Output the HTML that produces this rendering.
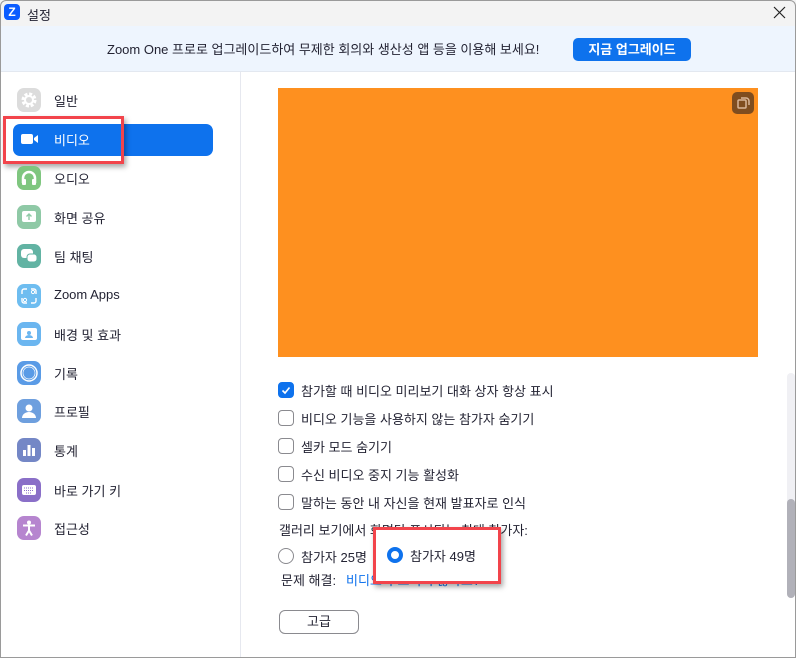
<!DOCTYPE html>
<html><head><meta charset="utf-8"><style>
*{margin:0;padding:0;box-sizing:border-box}
body{width:796px;height:658px;overflow:hidden;background:#fff;font-family:"Liberation Sans","Noto Sans CJK KR",sans-serif;font-size:13px;color:#232333;position:relative}
.abs{position:absolute}
.title{position:absolute;left:0;top:0;width:796px;height:26px;background:#f3f3f3}
.banner{position:absolute;left:0;top:26px;width:796px;height:46px;background:#eef5fe;border-bottom:1px solid #e3e8f0}
.side{position:absolute;left:0;top:72px;width:241px;height:586px;border-right:1px solid #e6e8ef}
.ic{position:absolute;left:17px;width:24px;height:24px;border-radius:7px}
.lbl{position:absolute;left:54px;font-size:13px}
.cb{position:absolute;left:278px;width:16px;height:16px;border:1px solid #8a8a8f;border-radius:4px;background:#fff}
.ct{position:absolute;left:301px;font-size:13px}
</style></head><body>
<div class="title">
 <div class="abs" style="left:4px;top:4px;width:16px;height:16px;border-radius:4px;background:#0b5cff;color:#fff;font-weight:bold;font-size:12px;text-align:center;line-height:16px">Z</div>
 <div class="abs" style="left:27px;top:5px;font-size:13px">설정</div>
 <svg class="abs" style="left:773px;top:6px" width="13" height="13"><path d="M1 1L12 12M12 1L1 12" stroke="#222" stroke-width="1.2"/></svg>
</div>
<div class="banner">
 <div class="abs" style="left:107px;top:13px;font-size:13px">Zoom One 프로로 업그레이드하여 무제한 회의와 생산성 앱 등을 이용해 보세요!</div>
 <div class="abs" style="left:573px;top:12px;width:118px;height:23px;background:#0e72ed;border-radius:5px;color:#fff;font-weight:bold;text-align:center;line-height:23px;font-size:13px">지금 업그레이드</div>
</div>
<div class="side">
 <div class="abs" style="left:13px;top:52px;width:200px;height:32px;background:#0e72ed;border-radius:7px"></div>
 <div class="abs" style="left:3px;top:44px;width:121px;height:48px;border:3px solid #f2444b;box-shadow:2px 3px 5px rgba(0,0,0,.35)"></div>
</div>
<div class="ic" style="top:88px;background:#dcdcdc"><svg width="24" height="24"><circle cx="12" cy="12" r="6" fill="none" stroke="#fff" stroke-width="3" stroke-dasharray="3 1.7"/><circle cx="12" cy="12" r="4" fill="none" stroke="#fff" stroke-width="2"/></svg></div>
<div class="lbl" style="top:91px">일반</div>
<svg class="abs" style="left:20px;top:132px" width="20" height="14"><rect x="1" y="2" width="12" height="10" rx="2" fill="#fff"/><path d="M14 6L18 3V11L14 8Z" fill="#fff"/></svg>
<div class="lbl" style="top:130px;color:#fff">비디오</div>
<div class="ic" style="top:166px;background:#7fc67f"><svg width="24" height="24"><path d="M6 17V12a6 6 0 0 1 12 0v5" fill="none" stroke="#fff" stroke-width="2.5"/><rect x="5" y="13" width="4" height="6" rx="1" fill="#fff"/><rect x="15" y="13" width="4" height="6" rx="1" fill="#fff"/></svg></div>
<div class="lbl" style="top:169px">오디오</div>
<div class="ic" style="top:205px;background:#8fc9a6"><svg width="24" height="24"><rect x="5" y="6" width="14" height="11" rx="2" fill="#fff"/><path d="M12 15V9M9.5 11.5L12 9L14.5 11.5" stroke="#8fc9a6" stroke-width="1.4" fill="none"/></svg></div>
<div class="lbl" style="top:208px">화면 공유</div>
<div class="ic" style="top:244px;background:#62b3a3"><svg width="24" height="24"><rect x="4" y="5" width="12" height="9" rx="3" fill="#fff"/><rect x="10" y="10" width="10" height="8" rx="3" fill="#fff" stroke="#62b3a3" stroke-width="1"/></svg></div>
<div class="lbl" style="top:247px">팀 채팅</div>
<div class="ic" style="top:284px;background:#6ebdf0"><svg width="24" height="24"><path d="M5 10V7a2 2 0 0 1 2-2h3M14 5h3a2 2 0 0 1 2 2v3M19 14v3a2 2 0 0 1-2 2h-3M10 19H7a2 2 0 0 1-2-2v-3" fill="none" stroke="#fff" stroke-width="1.4"/><circle cx="16" cy="8" r="1.6" fill="none" stroke="#fff"/><circle cx="8" cy="16" r="1.6" fill="none" stroke="#fff"/></svg></div>
<div class="lbl" style="top:287px">Zoom Apps</div>
<div class="ic" style="top:322px;background:#6bb6f0"><svg width="24" height="24"><rect x="4" y="6" width="16" height="12" rx="2" fill="#fff"/><circle cx="12" cy="11" r="2" fill="#6bb6f0"/><path d="M8 16a4 3 0 0 1 8 0Z" fill="#6bb6f0"/></svg></div>
<div class="lbl" style="top:325px">배경 및 효과</div>
<div class="ic" style="top:361px;background:#5a9be6"><svg width="24" height="24"><circle cx="12" cy="12" r="8" fill="none" stroke="#fff" stroke-width="1.5"/><circle cx="12" cy="12" r="6" fill="#5a9be6" stroke="#fff" stroke-width=".7"/></svg></div>
<div class="lbl" style="top:364px">기록</div>
<div class="ic" style="top:399px;background:#6e9fde"><svg width="24" height="24"><circle cx="12" cy="9" r="3.5" fill="#fff"/><path d="M5 19a7 6 0 0 1 14 0Z" fill="#fff"/></svg></div>
<div class="lbl" style="top:402px">프로필</div>
<div class="ic" style="top:438px;background:#7487c6"><svg width="24" height="24"><rect x="6" y="12" width="3" height="6" fill="#fff"/><rect x="10.5" y="7" width="3" height="11" fill="#fff"/><rect x="15" y="10" width="3" height="8" fill="#fff"/></svg></div>
<div class="lbl" style="top:441px">통계</div>
<div class="ic" style="top:478px;background:#8a6fc8"><svg width="24" height="24"><rect x="5" y="7" width="14" height="10" rx="2" fill="#fff"/><path d="M7 10h10M7 12.5h10M9 15h6" stroke="#8a6fc8" stroke-width="1" stroke-dasharray="1 1"/></svg></div>
<div class="lbl" style="top:481px">바로 가기 키</div>
<div class="ic" style="top:516px;background:#b685cf"><svg width="24" height="24"><circle cx="12" cy="6.5" r="2" fill="#fff"/><path d="M6 9.5h12M12 9.5v5M12 14.5l-3 5M12 14.5l3 5" stroke="#fff" stroke-width="2"/></svg></div>
<div class="lbl" style="top:519px">접근성</div>

<div class="abs" style="left:278px;top:88px;width:480px;height:269px;background:#fe901f"></div>
<div class="abs" style="left:732px;top:92px;width:22px;height:22px;background:#7f4d1f;border-radius:5px"><svg width="22" height="22"><rect x="6" y="8" width="8" height="8" rx="1" fill="none" stroke="#d9b79a" stroke-width="1.5"/><path d="M9 6h5a3 3 0 0 1 3 3v4" fill="none" stroke="#d9b79a" stroke-width="1.5"/></svg></div>

<div class="cb" style="top:382px;background:#0e72ed;border-color:#0e72ed"><svg width="14" height="14"><path d="M3.5 7.5L6 10L10.5 4.5" fill="none" stroke="#fff" stroke-width="1.6"/></svg></div>
<div class="ct" style="top:381px">참가할 때 비디오 미리보기 대화 상자 항상 표시</div>
<div class="cb" style="top:410px"></div><div class="ct" style="top:409px">비디오 기능을 사용하지 않는 참가자 숨기기</div>
<div class="cb" style="top:438px"></div><div class="ct" style="top:437px">셀카 모드 숨기기</div>
<div class="cb" style="top:466px"></div><div class="ct" style="top:465px">수신 비디오 중지 기능 활성화</div>
<div class="cb" style="top:494px"></div><div class="ct" style="top:493px">말하는 동안 내 자신을 현재 발표자로 인식</div>
<div class="abs" style="left:279px;top:520px">갤러리 보기에서 화면당 표시되는 최대 참가자:</div>
<div class="abs" style="left:278px;top:548px;width:16px;height:16px;border:1px solid #8a8a8f;border-radius:50%"></div>
<div class="abs" style="left:301px;top:547px">참가자 25명</div>
<div class="abs" style="left:281px;top:570px">문제 해결:</div>
<div class="abs" style="left:346px;top:570px;color:#0e72ed">비디오가 보이지 않나요?</div>
<div class="abs" style="left:373px;top:527px;width:128px;height:57px;border:3px solid #f2444b;background:#fff;box-shadow:2px 3px 5px rgba(0,0,0,.35)"></div>
<div class="abs" style="left:387px;top:547px;width:16px;height:16px;border:4px solid #0e72ed;border-radius:50%;background:#fff"></div>
<div class="abs" style="left:410px;top:546px">참가자 49명</div>
<div class="abs" style="left:279px;top:610px;width:80px;height:24px;border:1px solid #8a8a8f;border-radius:6px;text-align:center;line-height:22px">고급</div>

<div class="abs" style="left:787px;top:373px;width:8px;height:225px;background:#f0f0f4;border-radius:4px"></div>
<div class="abs" style="left:787px;top:499px;width:8px;height:99px;background:#b1b1b9;border-radius:4px"></div>
<div class="abs" style="left:0;top:0;width:796px;height:658px;border:1px solid #9a9a9a;border-radius:6px 6px 0 0;pointer-events:none"></div>
</body></html>
